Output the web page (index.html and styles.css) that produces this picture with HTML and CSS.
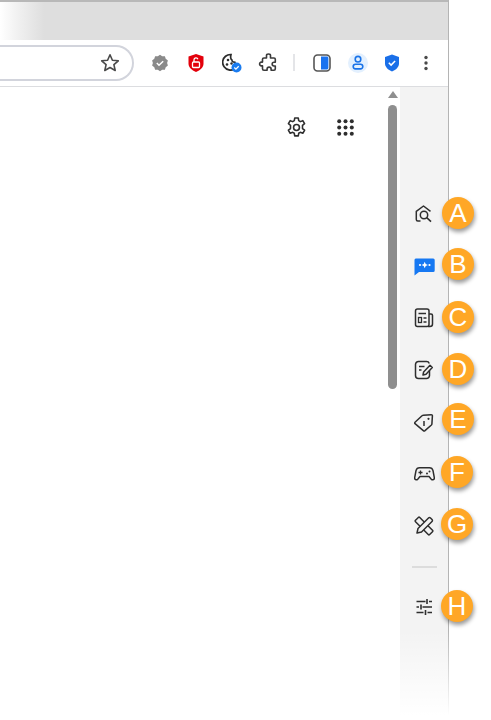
FILE: index.html
```html
<!DOCTYPE html>
<html lang="en">
<head>
<meta charset="utf-8">
<title>Browser sidebar</title>
<link rel="stylesheet" href="styles.css">
</head>
<body>
<div class="window">
  <div class="tabstrip"></div>
  <div class="toolbar">
    <div class="omnibox">
      <svg class="ico" width="20" height="20" viewBox="0 0 20 20"><path d="M10 1.800l2.400 5.400 5.900.6-4.400 3.900 1.300 5.800L10 14.500l-5.200 3 1.300-5.800-4.400-3.900 5.900-.6z" fill="none" stroke="#4a4a4a" stroke-width="1.600" stroke-linejoin="round"/></svg>
    </div>
    <div class="tools">
      <span class="tool"><svg width="18" height="18" viewBox="0 0 18 18"><path d="M9 .7l2.200 1.600 2.700-.1.800 2.600 2.200 1.600L16.100 9l.8 2.600-2.200 1.600-.8 2.600-2.700-.1L9 17.300l-2.200-1.600-2.700.1-.8-2.600-2.200-1.600L1.900 9l-.8-2.600 2.200-1.600.8-2.600 2.700.1z" fill="#8a8a8a"/><path d="M5.800 9l2.200 2.200 4.200-4" fill="none" stroke="#fff" stroke-width="1.500"/></svg></span>
      <span class="tool"><svg width="18" height="20" viewBox="0 0 18 20"><path d="M9 1l7.500 2.500v7c0 4-3.200 6.800-7.500 8.500-4.300-1.700-7.500-4.500-7.500-8.500v-7z" fill="#e3000b"/><rect x="5.500" y="9" width="7" height="5.500" rx="1" fill="none" stroke="#fff" stroke-width="1.300"/><path d="M7 9V6.800a2 2 0 0 1 3.900-.6" fill="none" stroke="#fff" stroke-width="1.300"/></svg></span>
      <span class="tool"><svg width="20" height="20" viewBox="0 0 20 20"><path d="M9 1.500a7.800 7.800 0 1 0 7 9.800c-1.800.3-3-.6-3.300-2.100-1.600.2-2.800-.8-2.900-2.400C8.700 6.500 8.300 4 9 1.500z" fill="none" stroke="#2c2c2c" stroke-width="1.700"/><circle cx="6" cy="7" r="1.300" fill="#2c2c2c"/><circle cx="5" cy="11.500" r="1.300" fill="#2c2c2c"/><circle cx="9.500" cy="10.500" r="1.200" fill="#2c2c2c"/><circle cx="14.500" cy="14.500" r="5" fill="#1a7cf0"/><path d="M12.300 14.500l1.600 1.600 2.800-2.900" fill="none" stroke="#fff" stroke-width="1.300"/></svg></span>
      <span class="tool"><svg width="20" height="20" viewBox="0 0 20 20"><path d="M8 2.500c0-1 1-1.500 2-1.500s2 .6 2 1.600V5h3.500c.8 0 1.300.5 1.300 1.300v2.900h-1.400c-2.300 0-2.300 3.800 0 3.800h1.400v2.800c0 .8-.5 1.400-1.300 1.400h-2.900v-1.300c0-2.400-4-2.400-4 0v1.300H5.400c-.8 0-1.400-.6-1.400-1.400v-2.900H2.900c-2.400 0-2.400-3.800 0-3.800H4V6.300C4 5.500 4.600 5 5.400 5H8z" fill="none" stroke="#3a3a3a" stroke-width="1.600" stroke-linejoin="round" transform="translate(.5 0)"/></svg></span>
      <span class="sep"></span>
      <span class="tool"><svg width="18" height="18" viewBox="0 0 18 18"><rect x="1" y="1" width="16" height="16" rx="3.500" fill="#fff" stroke="#555" stroke-width="1.600"/><path d="M8 2.600h6A1.400 1.400 0 0 1 15.400 4v10a1.400 1.400 0 0 1-1.400 1.400H8z" fill="#1a73f0"/></svg></span>
      <span class="avatar"><svg width="14" height="15" viewBox="0 0 14 15"><circle cx="7" cy="4.200" r="2.800" fill="none" stroke="#1a73e8" stroke-width="1.600"/><path d="M4.500 9.300h5a2.300 2.300 0 0 1 0 4.600h-5a2.300 2.300 0 0 1 0-4.600z" fill="none" stroke="#1a73e8" stroke-width="1.600"/></svg></span>
      <span class="tool narrow"><svg width="16" height="18" viewBox="0 0 16 18"><path d="M8 .6l7 2.400v6.300c0 3.800-3 6.600-7 8.100-4-1.500-7-4.300-7-8.100V3z" fill="#1a6fe8"/><path d="M4.800 8.800l2.300 2.300 4-4.200" fill="none" stroke="#fff" stroke-width="1.500"/></svg></span>
      <span class="tool narrow"><svg width="4" height="16" viewBox="0 0 4 16"><circle cx="2" cy="2.500" r="1.700" fill="#4a4a4a"/><circle cx="2" cy="8" r="1.700" fill="#4a4a4a"/><circle cx="2" cy="13.500" r="1.700" fill="#4a4a4a"/></svg></span>
    </div>
  </div>
  <div class="body">
    <main class="page">
      <div class="page-actions">
        <svg width="21" height="21" viewBox="0 0 20 20"><path d="M8.300 1.500h3.400l.4 2.500 1.500.9 2.400-.9 1.700 2.900-2 1.600v3l2 1.600-1.700 2.900-2.400-.9-1.500.9-.4 2.500H8.300l-.4-2.500-1.500-.9-2.400.9-1.700-2.900 2-1.600v-3l-2-1.600 1.700-2.900 2.400.9 1.500-.9z" fill="none" stroke="#2e2e2e" stroke-width="1.500" stroke-linejoin="round" transform="translate(0 -.5)"/><circle cx="10" cy="10" r="2.800" fill="none" stroke="#2e2e2e" stroke-width="1.500"/></svg>
        <svg width="17" height="17" viewBox="0 0 17 17" fill="#2e2e2e"><circle cx="2.200" cy="2.200" r="2"/><circle cx="8.500" cy="2.200" r="2"/><circle cx="14.800" cy="2.200" r="2"/><circle cx="2.200" cy="8.500" r="2"/><circle cx="8.500" cy="8.500" r="2"/><circle cx="14.800" cy="8.500" r="2"/><circle cx="2.200" cy="14.800" r="2"/><circle cx="8.500" cy="14.800" r="2"/><circle cx="14.800" cy="14.800" r="2"/></svg>
      </div>
    </main>
    <div class="scrollbar">
      <span class="arrow"></span>
      <span class="thumb"></span>
    </div>
    <aside class="sidebar">
      <div class="item"><svg width="20" height="20" viewBox="0 0 20 20"><path d="M6.500 17H3.800c-.8 0-1.500-.7-1.500-1.500V7.300L9.500 2l7 5.300" fill="none" stroke="#2e2e2e" stroke-width="1.500" stroke-linejoin="round"/><circle cx="10" cy="11" r="3.700" fill="none" stroke="#2e2e2e" stroke-width="1.500"/><path d="M12.700 13.700l4.300 4" stroke="#2e2e2e" stroke-width="1.600"/></svg><span class="badge up1">A</span></div>
      <div class="item"><svg width="21" height="20" viewBox="0 0 21 20"><path d="M1.800 2.500h17.400a1.500 1.500 0 0 1 1.500 1.500v10.500a1.500 1.500 0 0 1-1.500 1.500H5L.5 19.500V4A1.500 1.500 0 0 1 1.800 2.500z" fill="#1678f2"/><circle cx="6" cy="9" r="1.100" fill="#fff"/><circle cx="15.500" cy="9" r="1.100" fill="#fff"/><path d="M10.700 5.800l1 2.200 2.200 1-2.200 1-1 2.200-1-2.200-2.200-1 2.200-1z" fill="#fff"/></svg><span class="badge up2">B</span></div>
      <div class="item"><svg width="20" height="20" viewBox="0 0 20 20"><rect x="1.500" y="1" width="13.500" height="17.500" rx="2" fill="none" stroke="#2e2e2e" stroke-width="1.500"/><path d="M15 6h2A1.500 1.500 0 0 1 18.500 7.500V16a2.500 2.500 0 0 1-2.500 2.500h-2" fill="none" stroke="#2e2e2e" stroke-width="1.500"/><path d="M4.500 5.500h7.500" stroke="#2e2e2e" stroke-width="1.500"/><path d="M9.500 10h3M9.500 14h3" stroke="#2e2e2e" stroke-width="1.400"/><rect x="4.500" y="9.500" width="3" height="5" fill="none" stroke="#2e2e2e" stroke-width="1.300"/></svg><span class="badge up1">C</span></div>
      <div class="item"><svg width="20" height="20" viewBox="0 0 20 20"><path d="M15.500 10.500v5a3 3 0 0 1-3 3H4.500a3 3 0 0 1-3-3v-11a3 3 0 0 1 3-3h8a3 3 0 0 1 2.800 1.900" fill="none" stroke="#2e2e2e" stroke-width="1.500"/><path d="M5 6.500h5.500M5 10h2.500" stroke="#2e2e2e" stroke-width="1.500"/><path d="M9 15l.6-3L16 5.200l2.300 2.300-6.300 6.800z" fill="none" stroke="#2e2e2e" stroke-width="1.500" stroke-linejoin="round"/></svg><span class="badge up1">D</span></div>
      <div class="item"><svg width="20" height="20" viewBox="0 0 20 20"><path d="M1 10.300l7-6.600c.3-.3.700-.4 1.100-.4l8.100-.6c.7 0 1.300.5 1.200 1.200l-.5 8c0 .4-.2.800-.5 1.100l-6.400 5.600c-.5.400-1.200.4-1.700 0L1 11.700c-.4-.4-.4-1 0-1.400z" fill="none" stroke="#2e2e2e" stroke-width="1.500" stroke-linejoin="round"/><path d="M10 9v5" stroke="#2e2e2e" stroke-width="1.500"/><circle cx="14.500" cy="6.800" r="1.100" fill="#2e2e2e"/></svg><span class="badge up3">E</span></div>
      <div class="item"><svg width="21" height="20" viewBox="0 0 21 20"><path d="M5.500 3.800h10c1.800 0 3 1 3.500 2.800l1.300 7c.4 1.800-1.800 2.900-3 1.600l-2.300-2.700H6l-2.300 2.700c-1.200 1.300-3.400.2-3-1.600L2 6.600C2.500 4.800 3.700 3.800 5.500 3.800z" fill="none" stroke="#2e2e2e" stroke-width="1.500" stroke-linejoin="round"/><path d="M4.500 8.500h4M6.500 6.500v4" stroke="#2e2e2e" stroke-width="1.300"/><circle cx="13" cy="9.500" r="1" fill="#2e2e2e"/><circle cx="15.500" cy="7.500" r="1" fill="#2e2e2e"/></svg><span class="badge up2 left">F</span></div>
      <div class="item"><svg width="20" height="20" viewBox="0 0 20 20"><g fill="#f3f3f3" stroke="#2e2e2e" stroke-width="1.500" stroke-linejoin="round"><rect x="0" y="7" width="20" height="6" rx="1" transform="rotate(45 10 10)"/><path d="M3 17l1-4.500L14.500 2c.6-.6 1.400-.6 2 0l1.500 1.500c.6.600.6 1.400 0 2L7.500 16z"/></g></svg><span class="badge up2 left">G</span></div>
      <div class="divider"></div>
      <div class="item"><svg width="20" height="20" viewBox="0 0 20 20"><path d="M2.500 4.500h9M15 4.500h3M13 2v5M2.500 10h2.500M8.500 10h9.500M7 7.500v5M2.500 15.500h7M13.500 15.500h4.500M11.500 13v5" stroke="#2e2e2e" stroke-width="1.600" fill="none"/></svg><span class="badge up1 left">H</span></div>
    </aside>
  </div>
  <div class="fade"></div>
</div>
</body>
</html>
```
FILE: styles.css
```css
* { box-sizing: border-box; }
html, body { margin: 0; height: 100%; background: #fff; overflow: hidden; }
.window {
  position: relative;
  width: 449px;
  height: 720px;
  border-right: 1px solid #b4b4b4;
  display: flex;
  flex-direction: column;
  font-family: "Liberation Sans", Arial, sans-serif;
}
.tabstrip {
  height: 40px;
  flex: none;
  background: linear-gradient(90deg, #fff 0, #f2f2f2 16px, #dedede 44px);
  border-top: 2px solid #b8b8b8;
}
.toolbar {
  height: 47px;
  flex: none;
  background: #fff;
  border-bottom: 1px solid #dcdde0;
  border-top-right-radius: 10px;
  display: flex;
  align-items: center;
  position: relative;
  padding-bottom: 1px;
}
.toolbar::before {
  content: "";
  position: absolute;
  right: 0;
  top: 0;
  width: 12px;
  height: 12px;
  z-index: -1;
  background: #dedede;
}
.omnibox {
  width: 135px;
  height: 36px;
  margin-left: -1px;
  flex: none;
  border: 2px solid #d2d4dc;
  border-left: 0;
  border-radius: 0 18px 18px 0;
  display: flex;
  align-items: center;
  justify-content: flex-end;
  padding-right: 12px;
}
.tools {
  display: flex;
  align-items: center;
  margin-left: 8px;
}
.tool {
  width: 36px;
  height: 36px;
  display: flex;
  align-items: center;
  justify-content: center;
}
.tool.narrow { width: 34px; }
.tools svg { display: block; }
.sep {
  width: 2px;
  height: 17px;
  background: #e4e5e8;
  margin: 0 9px 0 7px;
}
.avatar {
  width: 20px;
  height: 20px;
  margin: 0 7px 0 8px;
  border-radius: 50%;
  background: #e3f0fe;
  display: flex;
  align-items: center;
  justify-content: center;
}
.body {
  flex: 1;
  min-height: 0;
  display: flex;
}
.page {
  flex: 1;
  min-width: 0;
}
.page-actions {
  display: flex;
  justify-content: flex-end;
  align-items: center;
  gap: 30px;
  padding: 30px 33px 0 0;
}
.page-actions svg { display: block; }
.scrollbar {
  width: 13px;
  flex: none;
  padding: 4px 2px 0 0;
  display: flex;
  flex-direction: column;
  align-items: center;
}
.arrow {
  width: 0;
  height: 0;
  border-left: 5px solid transparent;
  border-right: 5px solid transparent;
  border-bottom: 7px solid #8f8f8f;
  margin-bottom: 7px;
}
.thumb {
  width: 9px;
  height: 284px;
  border-radius: 4.500px;
  background: #8f8f8f;
}
.sidebar {
  width: 48px;
  flex: none;
  background: #f3f3f3;
  padding-top: 117px;
  display: flex;
  flex-direction: column;
  align-items: center;
}
.item {
  position: relative;
  width: 48px;
  height: 20px;
  margin-bottom: 32px;
  display: flex;
  justify-content: center;
}
.item svg { display: block; }
.item:last-child { margin-bottom: 0; }
.divider {
  width: 25px;
  height: 2px;
  background: #dcdcdc;
  margin: -2px 0 29px;
}
.badge {
  position: absolute;
  left: 42px;
  top: -6px;
  width: 32px;
  height: 32px;
  border-radius: 50%;
  background: #ffa726;
  color: #fff;
  font-size: 26px;
  line-height: 32px;
  text-align: center;
  box-shadow: 1px 3px 4px rgba(0, 0, 0, 0.4);
  z-index: 2;
}
.up1 { top: -7px; }
.up2 { top: -8px; }
.up3 { top: -9px; }
.left { left: 41px; }
.fade {
  position: absolute;
  left: 0;
  right: -1px;
  bottom: 0;
  height: 90px;
  background: linear-gradient(180deg, rgba(255,255,255,0), #fff 95%);
  z-index: 1;
  pointer-events: none;
}
```
